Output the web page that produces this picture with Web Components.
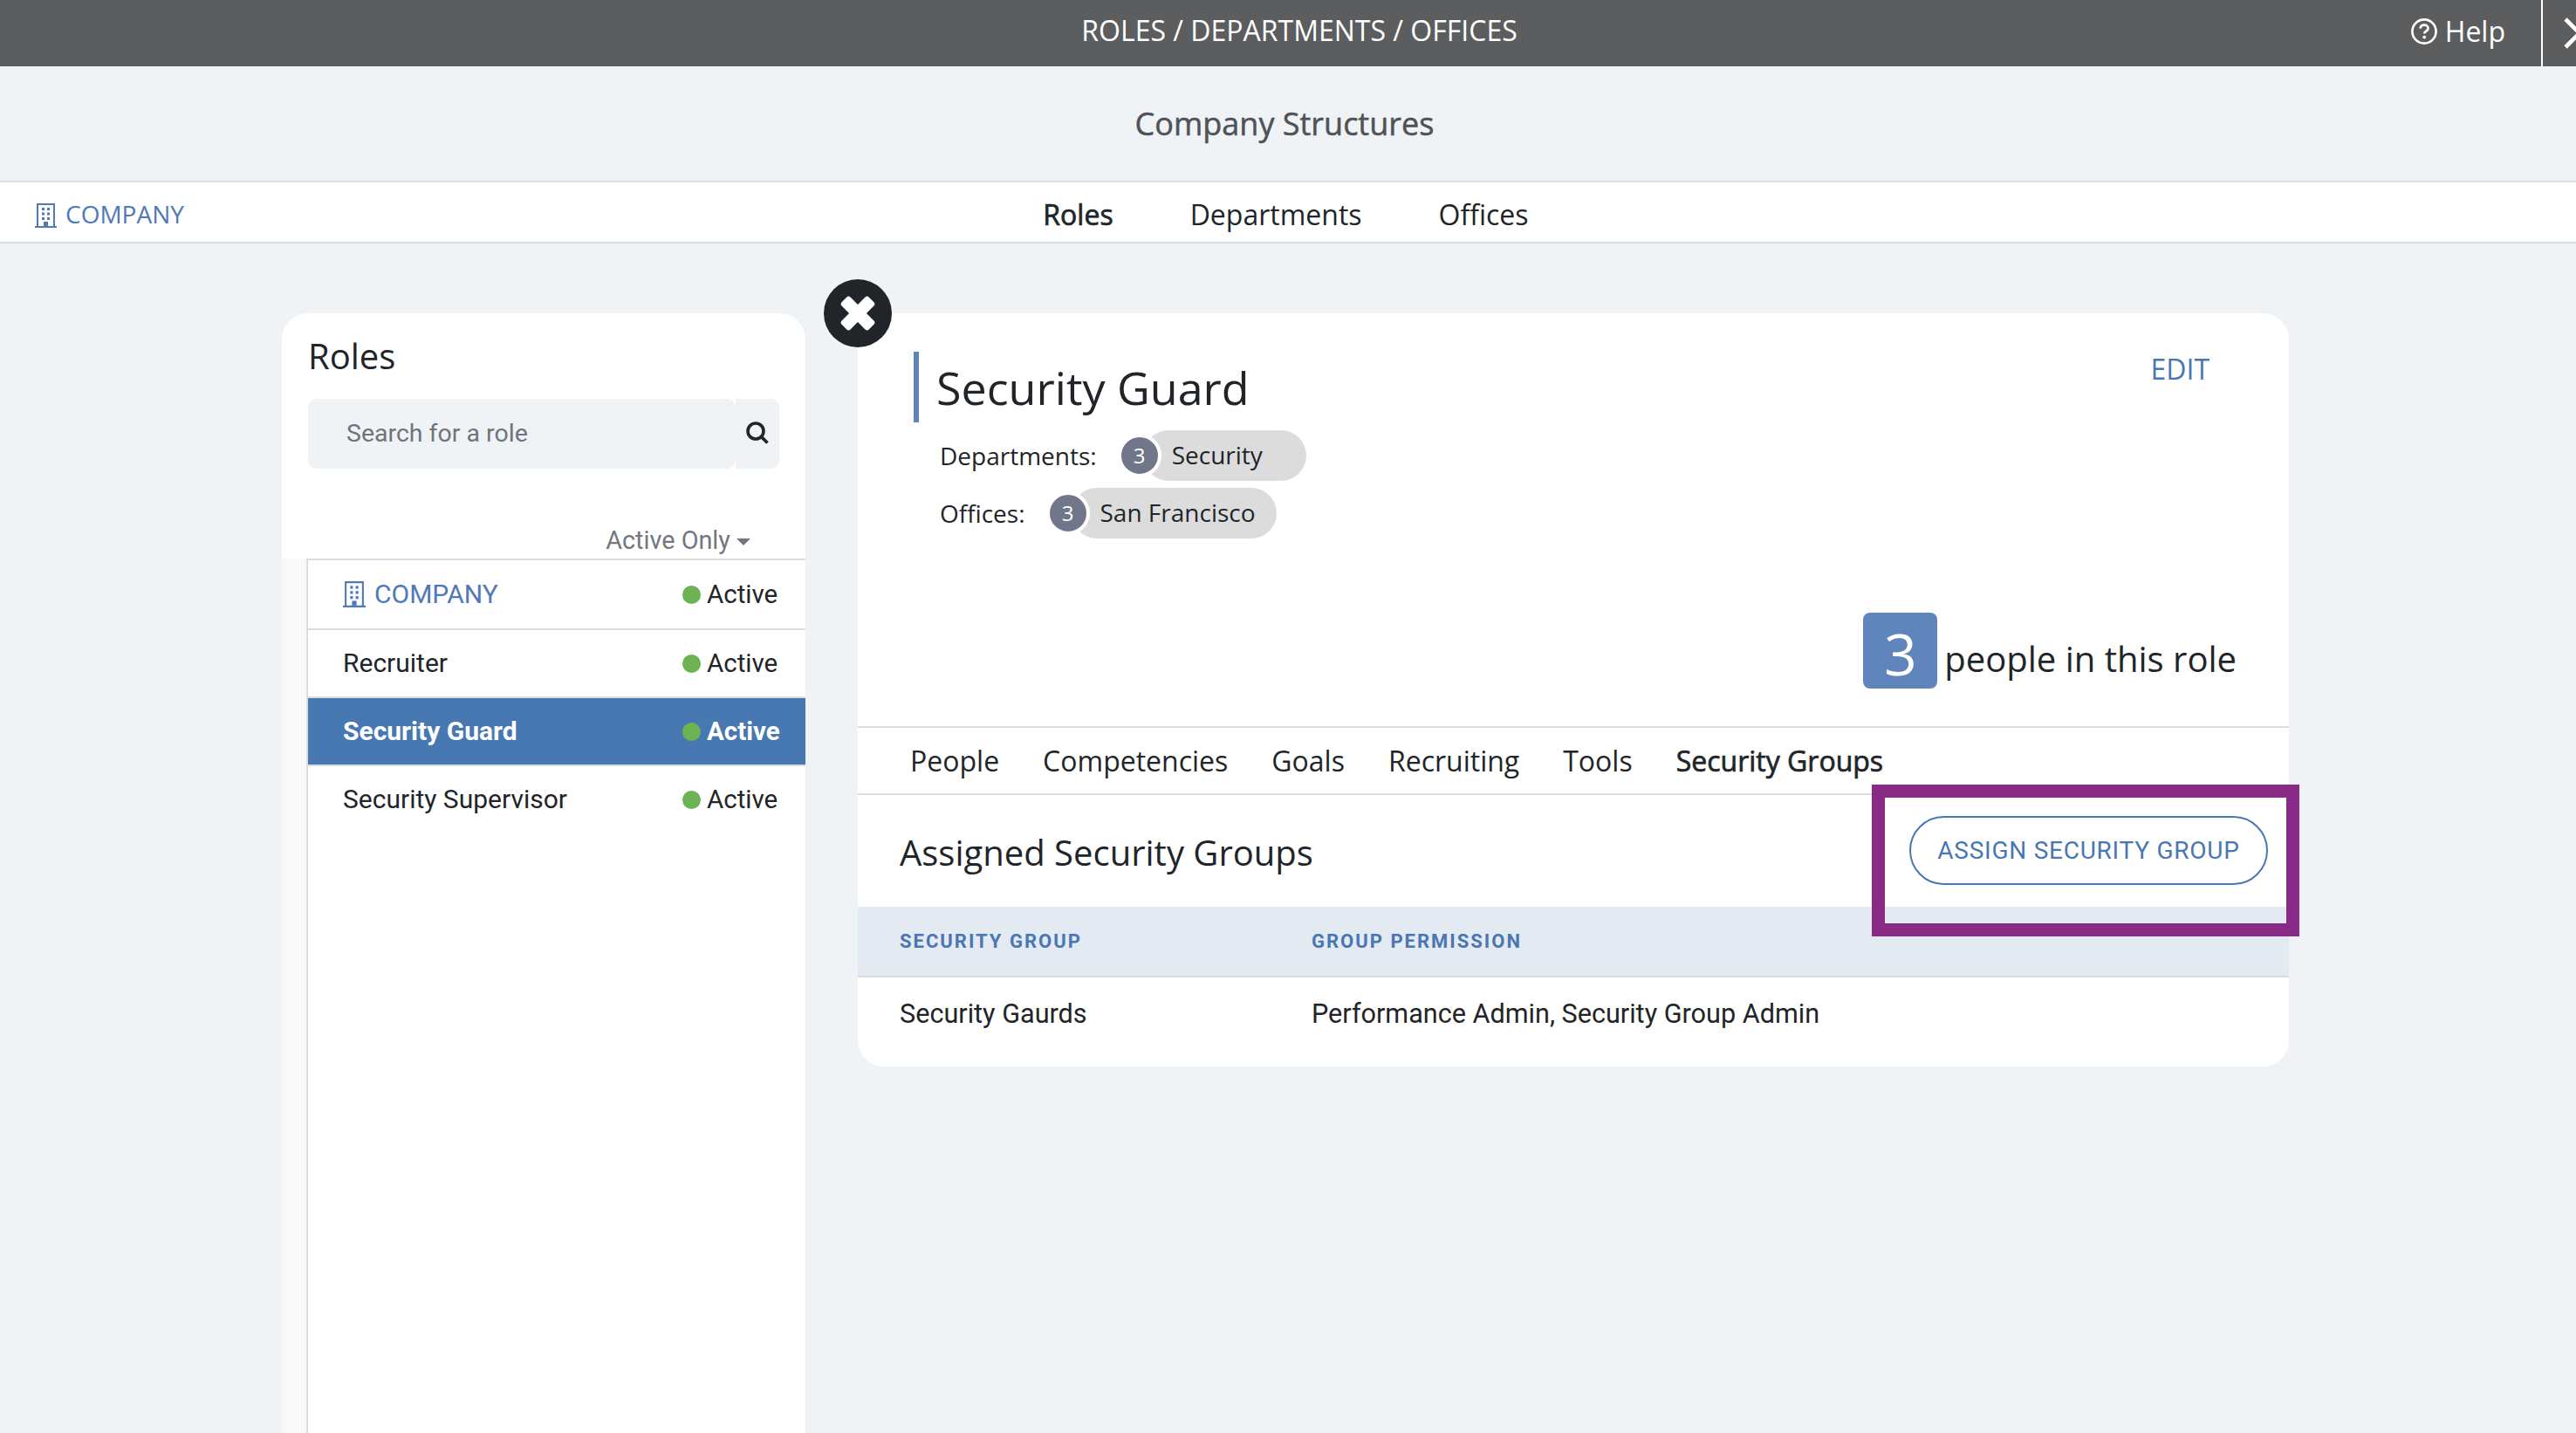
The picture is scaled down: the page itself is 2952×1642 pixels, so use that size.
<!DOCTYPE html>
<html><head><meta charset="utf-8">
<style>
html,body{margin:0;padding:0;height:100%;overflow:hidden;background:#eff3f6;font-family:"Open Sans",sans-serif;color:#212529}
app-shell{display:block;width:2952px;height:1642px;overflow:hidden}
</style></head><body>
<app-shell></app-shell>
<script>
const OS='"Open Sans",sans-serif', RB='Roboto,sans-serif';
const BUILDING=`<svg viewBox="0 0 25 28" width="100%" height="100%" preserveAspectRatio="none" fill="#4f79b7"><path fill-rule="evenodd" d="M2 0h21v26h2v2H0v-2h2zM4 2v24h17V2z"/><rect x="8" y="5" width="3" height="3"/><rect x="14" y="5" width="3" height="3"/><rect x="8" y="10.5" width="3" height="3"/><rect x="14" y="10.5" width="3" height="3"/><rect x="8" y="16" width="3" height="3"/><rect x="14" y="16" width="3" height="3"/><rect x="10" y="21" width="5" height="5"/></svg>`;
function def(name, css, html){
  customElements.define(name, class extends HTMLElement{
    constructor(){super();const r=this.attachShadow({mode:'open'});
      r.innerHTML=`<style>${css}</style>`+html;}
  });
}
def('top-bar',`:host{display:flex;height:76px;background:#5c5d5f;color:#fff;align-items:center;justify-content:center;position:relative;font:32px/44px ${OS};overflow:hidden}
.t{margin-left:26px;margin-top:-7px}
.h{position:absolute;right:81px;top:14px;display:flex;align-items:center;gap:8px;height:44px}
.h svg{width:32px;height:32px}
.d{position:absolute;left:2912px;top:0;width:2px;height:76px;background:#fff}
.x{position:absolute;left:2938px;top:20px;width:36px;height:36px}`,
`<span class="t">ROLES / DEPARTMENTS / OFFICES</span>
<span class="h"><svg viewBox="0 0 32 32" fill="none"><circle cx="16" cy="16" r="13.6" stroke="#fff" stroke-width="2.6"/><path d="M11.6 12.6c.3-2.6 2.2-3.9 4.5-3.9 2.5 0 4.4 1.5 4.4 3.7 0 3.2-4.3 3.2-4.3 6.2" stroke="#fff" stroke-width="2.8"/><circle cx="16.2" cy="22.6" r="1.9" fill="#fff"/></svg>Help</span>
<span class="d"></span><svg class="x" viewBox="0 0 36 36"><path d="M2 2L34 34M34 2L2 34" stroke="#fff" stroke-width="4.6" fill="none"/></svg>`);
def('page-title',`:host{display:flex;height:131px;align-items:center;justify-content:center;border-bottom:2px solid #dcdfe2;color:#4f5256;font:400 36px/48px ${OS};-webkit-text-stroke:.5px #4f5256}
span{margin-top:1px;margin-left:-8px}`,`<span><slot></slot></span>`);
def('nav-tab',`:host{display:block;font:32px/44px ${OS};color:#212529}
:host([active]){-webkit-text-stroke:.7px #212529}`,`<slot></slot>`);
def('company-link',`:host{display:flex;align-items:center;color:#4f79b7;gap:10px;font-size:28px}
i{display:block;width:var(--iw,25px);height:var(--ih,28px);flex:none}`,`<i>${BUILDING}</i><span><slot></slot></span>`);
def('sub-nav',`:host{display:block;height:68px;background:#fff;border-bottom:2px solid #dcdcdc}
.row{display:flex;height:68px;align-items:center;padding-left:40px}
.c{flex:1;display:flex;justify-content:center;gap:88px;margin-left:-216px;padding-top:6px}
.l{padding-top:4px}`,`<div class="row"><div class="l"><slot name="left"></slot></div><div class="c"><slot></slot></div></div>`);
def('search-box',`:host{display:flex;height:80px;width:540px;font:28.5px/40px ${RB};color:#6f747c}
.i{flex:1;background:#eff3f6;border-radius:10px;display:flex;align-items:center;padding-left:44px}
.b{width:50px;background:#eff3f6;border-radius:0 10px 10px 0;display:flex;align-items:center;justify-content:center}
.b svg{width:26px;height:26px;margin-top:-2px}`,
`<div class="i"><slot></slot></div><div class="b"><svg viewBox="0 0 26 26" fill="none" stroke="#212529"><circle cx="11" cy="11" r="9" stroke-width="3.6"/><path d="M17.5 17.5l7 7" stroke-width="3.8"/></svg></div>`);
def('role-row',`:host{display:flex;align-items:center;justify-content:space-between;height:76px;padding:0 32px 0 40px;border-bottom:2px solid #dcdcdc;font:30px/40px ${RB};color:#212529;background:#fff}
:host([first]){height:78px}
:host([selected]){background:#4878b2;color:#fff;font-weight:700}
:host([last]){border-bottom:none}
.n{display:block}
.s{display:flex;align-items:center;gap:7px;width:109px;font-size:29.5px;white-space:nowrap}
.s:before{content:"";width:21px;height:21px;border-radius:50%;background:#6db253;flex:none}`,
`<span class="n"><slot></slot></span><span class="s">Active</span>`);
def('roles-panel',`:host{display:block;width:600px;background:#fff;border-radius:30px 30px 0 0;height:1400px;flex:none;overflow:hidden}
.head{padding:0 30px}
h2{font:400 40px/54px ${OS};margin:0;padding-top:22px;height:76px;color:#212529}
.f{height:103px;box-sizing:border-box;padding:0 33px 1px 0;display:flex;justify-content:flex-end;align-items:flex-end;font:28.8px/40px ${RB};color:#73777f;gap:7px}
.f i{width:0;height:0;border:8px solid transparent;border-top:8px solid #73777f;border-bottom:0;margin-bottom:14px}
.lw{background:#f9f9f9;padding-left:28px}
.l{border-left:2px solid #dcdcdc;border-top:2px solid #dcdcdc;background:#fff;height:1000px}`,
`<div class="head"><h2><slot name="title"></slot></h2><slot name="search"></slot>
<div class="f">Active Only<i></i></div></div>
<div class="lw"><div class="l"><slot></slot></div></div>`);
def('count-pill',`:host{display:block;position:relative;height:58px;width:var(--w);font:28px/38px ${OS};color:#212529}
.p{position:absolute;left:25px;right:0;top:0;height:58px;background:#dcdcdc;border-radius:29px}
.c{position:absolute;left:-4px;top:4px;width:42px;height:42px;background:#71768a;color:#fff;border-radius:50%;border:4px solid #fff;display:flex;align-items:center;justify-content:center;font-size:24px}
.t{position:absolute;left:58px;top:9px;white-space:nowrap}`,
`<div class="p"></div><div class="c">3</div><div class="t"><slot></slot></div>`);
def('meta-row',`:host{display:flex;height:66px;align-items:flex-start;font:28px/38px ${OS};color:#212529}
.l{padding-top:10px}`,`<div class="l"><slot name="label"></slot></div><div style="margin-left:var(--g)"><slot></slot></div>`);
def('role-title',`:host{display:block;box-sizing:border-box;border-left:6px solid #6085bc;height:81px;padding:5px 0 0 20px;font:52px/72px ${OS};color:#212529;white-space:nowrap}`,`<slot></slot>`);
def('detail-tab',`:host{display:block;font:32px/44px ${OS};color:#212529}
:host([active]){-webkit-text-stroke:.7px #212529}`,`<slot></slot>`);
def('outline-btn',`:host{display:flex;align-items:center;justify-content:center;width:411px;height:79px;box-sizing:border-box;border:2px solid #4a76b4;border-radius:40px;color:#4a76b4;font:28px/40px ${RB};letter-spacing:.75px;text-transform:uppercase;white-space:nowrap}`,`<slot></slot>`);
def('role-detail',`:host{display:block;width:1640px;height:863px;background:#fff;border-radius:30px;position:relative;flex:none;overflow:hidden}
.top{height:475px;box-sizing:border-box;padding:44px 0 0 64px;border-bottom:2px solid #dcdcdc;position:relative}
.meta{padding:9px 0 0 30px}
.edit{position:absolute;right:91px;top:42px;font:32px/44px ${OS};color:#4a76b4}
.count{position:absolute;right:60px;top:343px;display:flex;align-items:flex-start;gap:8px;font:40px/56px ${OS};color:#212529;white-space:nowrap}
.b{width:85px;height:87px;box-sizing:border-box;padding-top:5px;border-radius:8px;background:#5f85bc;color:#fff;display:flex;align-items:center;justify-content:center;font:66px/82px ${OS}}
.count span.tx{padding-top:25px}
.tabs{display:flex;height:75px;align-items:center;gap:50px;padding:0 0 0 60px;border-bottom:2px solid #dcdcdc}
.head{height:128px;box-sizing:border-box;padding-top:3px;display:flex;align-items:center;padding-left:48px;font:40px/54px ${OS};color:#212529}
.btn{position:absolute;left:1205px;top:576px}
.th{display:grid;grid-template-columns:472px 1fr;padding-left:48px;height:79px;align-items:center;background:#e3eaf1;border-bottom:2px solid #dcdcdc;color:#4a76b4;font:700 22px/30px ${RB};letter-spacing:2px}
.td{display:grid;grid-template-columns:472px 1fr;padding:2px 0 0 48px;height:80px;align-items:center;font:30.6px/40px ${RB};color:#212529}`,
`<div class="top"><slot name="title"></slot><div class="meta"><slot name="meta"></slot></div>
<div class="edit">EDIT</div><div class="count"><div class="b">3</div><span class="tx">people in this role</span></div></div>
<div class="tabs"><slot name="tabs"></slot></div>
<div class="head">Assigned Security Groups</div>
<div class="btn"><slot name="btn"></slot></div>
<div class="th"><span>SECURITY GROUP</span><span>GROUP PERMISSION</span></div>
<div class="td"><span>Security Gaurds</span><span>Performance Admin, Security Group Admin</span></div>`);
def('close-button',`:host{display:flex;position:absolute;left:944px;top:320px;width:78px;height:78px;border-radius:50%;background:#212529;align-items:center;justify-content:center}
svg{width:44px;height:44px}`,`<svg viewBox="0 0 44 44" fill="#fff"><rect x="0" y="15" width="44" height="14" rx="3" transform="rotate(45 22 22)"/><rect x="0" y="15" width="44" height="14" rx="3" transform="rotate(-45 22 22)"/></svg>`);
def('highlight-box',`:host{display:block;position:absolute;left:2145px;top:899px;width:490px;height:174px;box-sizing:border-box;border:15px solid #8a2a87}`,``);
def('app-shell',`:host{display:block;position:relative}
main{display:flex;gap:60px;padding:80px 0 0 323px}`,
`<top-bar></top-bar><page-title>Company Structures</page-title>
<sub-nav><company-link slot="left">COMPANY</company-link><nav-tab active>Roles</nav-tab><nav-tab>Departments</nav-tab><nav-tab>Offices</nav-tab></sub-nav>
<main>
<roles-panel><span slot="title">Roles</span><search-box slot="search">Search for a role</search-box>
<role-row first><company-link style="--iw:26px;--ih:30px;font-family:Roboto,sans-serif;font-size:30px;gap:10px">COMPANY</company-link></role-row><role-row>Recruiter</role-row><role-row selected>Security Guard</role-row><role-row last>Security Supervisor</role-row></roles-panel>
<role-detail><role-title slot="title">Security Guard</role-title>
<meta-row slot="meta" style="--g:28px"><span slot="label">Departments:</span><count-pill style="--w:212px">Security</count-pill></meta-row>
<meta-row slot="meta" style="--g:28px"><span slot="label">Offices:</span><count-pill style="--w:260px">San Francisco</count-pill></meta-row>
<detail-tab slot="tabs">People</detail-tab><detail-tab slot="tabs">Competencies</detail-tab><detail-tab slot="tabs">Goals</detail-tab><detail-tab slot="tabs">Recruiting</detail-tab><detail-tab slot="tabs">Tools</detail-tab><detail-tab slot="tabs" active>Security Groups</detail-tab>
<outline-btn slot="btn">Assign Security Group</outline-btn></role-detail>
</main>
<close-button></close-button><highlight-box></highlight-box>`);
</script>
</body></html>
